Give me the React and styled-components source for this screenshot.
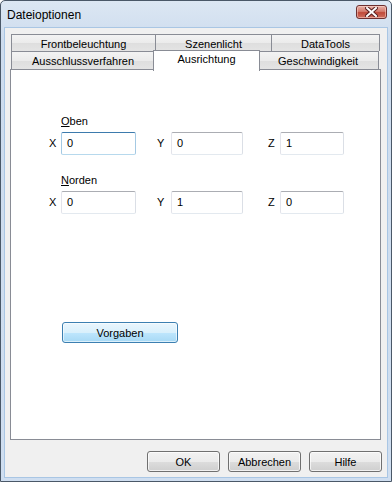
import React from 'react';
import styled, { createGlobalStyle } from 'styled-components';

const GlobalStyle = createGlobalStyle`
	html, body {
		margin: 0;
		padding: 0;
		background: #ffffff;
	}
	* {
		box-sizing: border-box;
	}
`;

const font = `"Liberation Sans", Arial, sans-serif`;

export default function App() {
	return (
		<>
			<GlobalStyle />
			<Window>
				<TitleBar>
					<Title>Dateioptionen</Title>
					<CloseButton>
						<svg width="13" height="10" viewBox="0 0 13 10">
							<path d="M2 1 L11 9 M11 1 L2 9" stroke="#5a2020" strokeWidth="4" strokeLinecap="square" />
							<path d="M2 1 L11 9 M11 1 L2 9" stroke="#ffffff" strokeWidth="2" strokeLinecap="square" />
						</svg>
					</CloseButton>
				</TitleBar>
				<Client>
					<TabControl>
						<TabRow>
							<Tab $w={145}>Frontbeleuchtung</Tab>
							<Tab $w={117}>Szenenlicht</Tab>
							<Tab $w={109}>DataTools</Tab>
						</TabRow>
						<TabRow>
							<Tab $w={144}>Ausschlussverfahren</Tab>
							<Tab $w={107} $active>
								Ausrichtung
							</Tab>
							<Tab $w={122}>Geschwindigkeit</Tab>
						</TabRow>
						<Panel>
							<Group>
								<GroupLabel>
									<u>O</u>ben
								</GroupLabel>
								<FieldRow>
									<Field>
										<AxisLabel $w={12}>X</AxisLabel>
										<Input $w={75} $focused>0</Input>
									</Field>
									<Field>
										<AxisLabel $w={14}>Y</AxisLabel>
										<Input $w={72}>0</Input>
									</Field>
									<Field>
										<AxisLabel $w={12}>Z</AxisLabel>
										<Input $w={64}>1</Input>
									</Field>
								</FieldRow>
							</Group>
							<Group $gap={19}>
								<GroupLabel>
									<u>N</u>orden
								</GroupLabel>
								<FieldRow>
									<Field>
										<AxisLabel $w={12}>X</AxisLabel>
										<Input $w={75}>0</Input>
									</Field>
									<Field>
										<AxisLabel $w={14}>Y</AxisLabel>
										<Input $w={72}>1</Input>
									</Field>
									<Field>
										<AxisLabel $w={12}>Z</AxisLabel>
										<Input $w={64}>0</Input>
									</Field>
								</FieldRow>
							</Group>
							<DefaultButton>Vorgaben</DefaultButton>
						</Panel>
					</TabControl>
					<ButtonBar>
						<Button>OK</Button>
						<Button>Abbrechen</Button>
						<Button>Hilfe</Button>
					</ButtonBar>
				</Client>
			</Window>
		</>
	);
}

const Window = styled.div`
	width: 392px;
	height: 482px;
	display: flex;
	flex-direction: column;
	border: 1px solid #4a5868;
	border-radius: 5px 5px 0 0;
	padding: 0 3px 3px 3px;
	background: linear-gradient(#dce7f3, #cddcee 40px, #cfdef0);
	font-family: ${font};
	font-size: 11px;
	color: #000;
`;

const TitleBar = styled.div`
	height: 26px;
	display: flex;
	align-items: flex-start;
	justify-content: space-between;
	padding: 0 1px 0 3px;
`;

const Title = styled.div`
	font-size: 12px;
	line-height: 14px;
	margin-top: 7px;
	color: #000;
`;

const CloseButton = styled.div`
	width: 31px;
	height: 14px;
	margin-top: 4px;
	display: flex;
	align-items: center;
	justify-content: center;
	border: 1px solid #6e3030;
	border-radius: 3px;
	background: linear-gradient(#e8b0a6, #d47c6e 45%, #c04a3a 55%, #d07060);
	box-shadow: inset 0 0 0 1px rgba(255, 220, 210, 0.5);
`;

const Client = styled.div`
	flex: 1;
	display: flex;
	flex-direction: column;
	background: #f0f0f0;
	border: 1px solid #a9c6e4;
	padding-top: 6px;
`;

const TabControl = styled.div`
	flex: 1;
	display: flex;
	flex-direction: column;
	margin: 0 6px 0 5px;
`;

const TabRow = styled.div`
	display: flex;
	padding: 0 1px;
	height: ${(p) => (p.$h ? p.$h : 17)}px;
	&:nth-child(2) {
		height: 18px;
	}
`;

const Tab = styled.div`
	width: ${(p) => p.$w}px;
	height: ${(p) => (p.$active ? 21 : 'auto')};
	border: 1px solid #898c95;
	border-bottom: none;
	margin-left: -1px;
	&:first-child {
		margin-left: 0;
	}
	display: flex;
	justify-content: center;
	align-items: ${(p) => (p.$active ? 'flex-start' : 'center')};
	padding-top: ${(p) => (p.$active ? 2 : 1)}px;
	background: ${(p) => (p.$active ? '#ffffff' : 'linear-gradient(#f3f3f3, #ebebeb 50%, #dedede 51%, #e4e4e4)')};
	white-space: nowrap;
	${(p) =>
		p.$active &&
		`
		height: 21px;
		margin: -1px -2px -2px -2px;
		z-index: 1;
	`}
`;

const Panel = styled.div`
	flex: 1;
	display: flex;
	flex-direction: column;
	align-items: flex-start;
	background: #ffffff;
	border: 1px solid #898c95;
	padding: 45px 0 0 38px;
`;

const Group = styled.div`
	display: flex;
	flex-direction: column;
	margin-top: ${(p) => p.$gap || 0}px;
`;

const GroupLabel = styled.div`
	line-height: 13px;
	height: 13px;
	margin: 0 0 4px 12px;
	u {
		text-decoration: underline;
		text-underline-offset: 1px;
	}
`;

const FieldRow = styled.div`
	display: grid;
	grid-template-columns: 108px 111px auto;
`;

const Field = styled.div`
	display: flex;
	align-items: center;
`;

const AxisLabel = styled.span`
	width: ${(p) => p.$w}px;
	line-height: 13px;
`;

const Input = styled.div`
	width: ${(p) => p.$w}px;
	height: 23px;
	display: flex;
	align-items: center;
	padding: 0 0 1px 5px;
	border: 1px solid;
	border-radius: 2px;
	border-color: ${(p) => (p.$focused ? '#3d7bad #a4c9e3 #b7d9ed #a4c9e3' : '#abadb3 #dbdfe6 #e3e9ef #e2e3ea')};
	background: #ffffff;
`;

const DefaultButton = styled.div`
	width: 116px;
	height: 21px;
	margin: 108px 0 0 13px;
	display: flex;
	align-items: center;
	justify-content: center;
	border: 1px solid #3c7fb1;
	border-radius: 3px;
	background: linear-gradient(#eaf6fd, #d9f0fc 50%, #bee6fd 51%, #a7d9f5);
	box-shadow: inset 0 0 0 1px rgba(255, 255, 255, 0.6);
`;

const ButtonBar = styled.div`
	display: flex;
	justify-content: flex-end;
	gap: 8px;
	padding: 11px 5px 5px 0;
`;

const Button = styled.div`
	width: 73px;
	height: 21px;
	display: flex;
	align-items: center;
	justify-content: center;
	border: 1px solid #707070;
	border-radius: 3px;
	background: linear-gradient(#f2f2f2, #ebebeb 50%, #dddddd 51%, #cfcfcf);
	box-shadow: inset 0 0 0 1px rgba(255, 255, 255, 0.7);
`;
